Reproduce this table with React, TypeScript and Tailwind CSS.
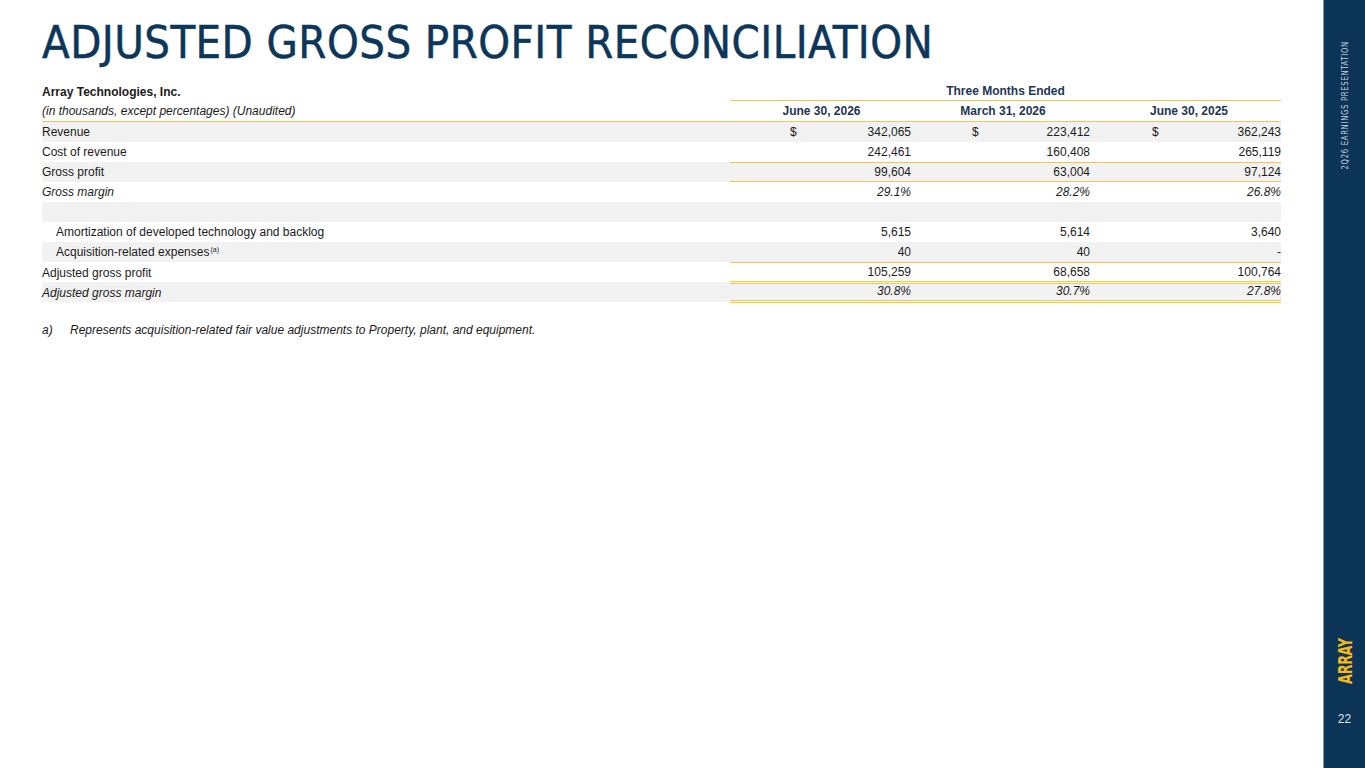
import React from "react";

type Cell = { d?: boolean; v: string };
type RowProps = {
  label: React.ReactNode;
  cells: Cell[];
  gray?: boolean;
  italic?: boolean;
  indent?: boolean;
  topLine?: boolean;
  bottomLine?: boolean;
  doubleBottom?: boolean;
};

const colPad = ["pl-[60px] pr-[2px]", "pl-[59px] pr-[3px]", "pl-[59px] pr-0"];

function Row({ label, cells, gray, italic, indent, topLine, bottomLine, doubleBottom }: RowProps) {
  return (
    <div className={`grid grid-cols-[688px_183px_180px_188px] h-[20px] ${gray ? "bg-[#f2f2f2]" : ""}`}>
      <div className={`flex items-center ${indent ? "pl-[14px]" : ""} ${italic ? "italic" : ""}`}>{label}</div>
      {cells.map((c, i) => (
        <div
          key={i}
          className={`flex items-center justify-between ${colPad[i]} ${italic ? "italic" : ""} ${
            topLine ? "border-t-[1.5px] border-t-[#f4c550]" : ""
          } ${bottomLine ? "border-b-[1.5px] border-b-[#f4c550]" : ""} ${
            doubleBottom ? "border-b-[3px] border-double border-b-[#f5cf3f]" : ""
          }`}
        >
          <span>{c.d ? "$" : ""}</span>
          <span>{c.v}</span>
        </div>
      ))}
    </div>
  );
}

export default function App() {
  return (
    <div className="w-[1365px] h-[768px] flex bg-white overflow-hidden">
      <div className="flex-1 pl-[42px] pr-[42px]">
        <h1
          className="text-[#0c365a] text-[45px] leading-none pt-[20px] tracking-[0.45px] [-webkit-text-stroke:0.5px_#0c365a]"
          style={{ fontFamily: '"DejaVu Sans Condensed", "DejaVu Sans", sans-serif' }}
        >
          ADJUSTED GROSS PROFIT RECONCILIATION
        </h1>
        <div
          className="mt-[17px] w-[1239px] text-[12px] text-[#1b1b1b]"
          style={{ fontFamily: '"Liberation Sans", Arial, sans-serif' }}
        >
          <div className="grid grid-cols-[688px_551px] h-[19px]">
            <div className="flex items-center font-bold">Array Technologies, Inc.</div>
            <div className="flex items-center justify-center font-bold text-[#1f3556] border-b-[1.5px] border-b-[#f4c550]">
              Three Months Ended
            </div>
          </div>
          <div className="grid grid-cols-[688px_183px_180px_188px] h-[21px] border-b-[1.5px] border-b-[#f4c550]">
            <div className="flex items-center italic">(in thousands, except percentages) (Unaudited)</div>
            <div className="flex items-center justify-center font-bold text-[#1f3556]">June 30, 2026</div>
            <div className="flex items-center justify-center font-bold text-[#1f3556]">March 31, 2026</div>
            <div className="flex items-center justify-center font-bold text-[#1f3556] pl-[4px]">June 30, 2025</div>
          </div>
          <Row
            gray
            label="Revenue"
            cells={[
              { d: true, v: "342,065" },
              { d: true, v: "223,412" },
              { d: true, v: "362,243" },
            ]}
          />
          <Row label="Cost of revenue" cells={[{ v: "242,461" }, { v: "160,408" }, { v: "265,119" }]} />
          <Row gray topLine bottomLine label="Gross profit" cells={[{ v: "99,604" }, { v: "63,004" }, { v: "97,124" }]} />
          <Row italic label="Gross margin" cells={[{ v: "29.1%" }, { v: "28.2%" }, { v: "26.8%" }]} />
          <Row gray label="" cells={[{ v: "" }, { v: "" }, { v: "" }]} />
          <Row
            indent
            label="Amortization of developed technology and backlog"
            cells={[{ v: "5,615" }, { v: "5,614" }, { v: "3,640" }]}
          />
          <Row
            gray
            indent
            label={
              <span>
                Acquisition-related expenses
                <span className="text-[7px] relative top-[-4px] ml-[1px]">(a)</span>
              </span>
            }
            cells={[{ v: "40" }, { v: "40" }, { v: "-" }]}
          />
          <Row
            topLine
            doubleBottom
            label="Adjusted gross profit"
            cells={[{ v: "105,259" }, { v: "68,658" }, { v: "100,764" }]}
          />
          <Row
            gray
            italic
            doubleBottom
            label="Adjusted gross margin"
            cells={[{ v: "30.8%" }, { v: "30.7%" }, { v: "27.8%" }]}
          />
          <div className="flex italic mt-[19px]">
            <span className="w-[28px]">a)</span>
            <span>Represents acquisition-related fair value adjustments to Property, plant, and equipment.</span>
          </div>
        </div>
      </div>
      <div className="w-[42px] h-full bg-[#0b3457] border-l border-l-[#7f97b0] flex flex-col items-center">
        <div
          className="mt-[25px] text-[9.5px] tracking-[0.9px] text-[#c9d4e0] [writing-mode:vertical-rl] rotate-180 scale-y-[0.8] leading-none"
          style={{ fontFamily: '"DejaVu Sans Condensed", "DejaVu Sans", sans-serif' }}
        >
          2Q26 EARNINGS PRESENTATION
        </div>
        <div
          className="mt-auto text-[20px] font-bold text-[#f6b81a] [writing-mode:vertical-rl] rotate-180 scale-y-[0.71] leading-none tracking-[-0.5px]"
          style={{ fontFamily: '"DejaVu Sans Condensed", "DejaVu Sans", sans-serif' }}
        >
          ARRAY
        </div>
        <div
          className="mt-[20px] mb-[43px] text-[12px] text-[#dfe6ee] leading-none"
          style={{ fontFamily: '"Liberation Sans", Arial, sans-serif' }}
        >
          22
        </div>
      </div>
    </div>
  );
}
